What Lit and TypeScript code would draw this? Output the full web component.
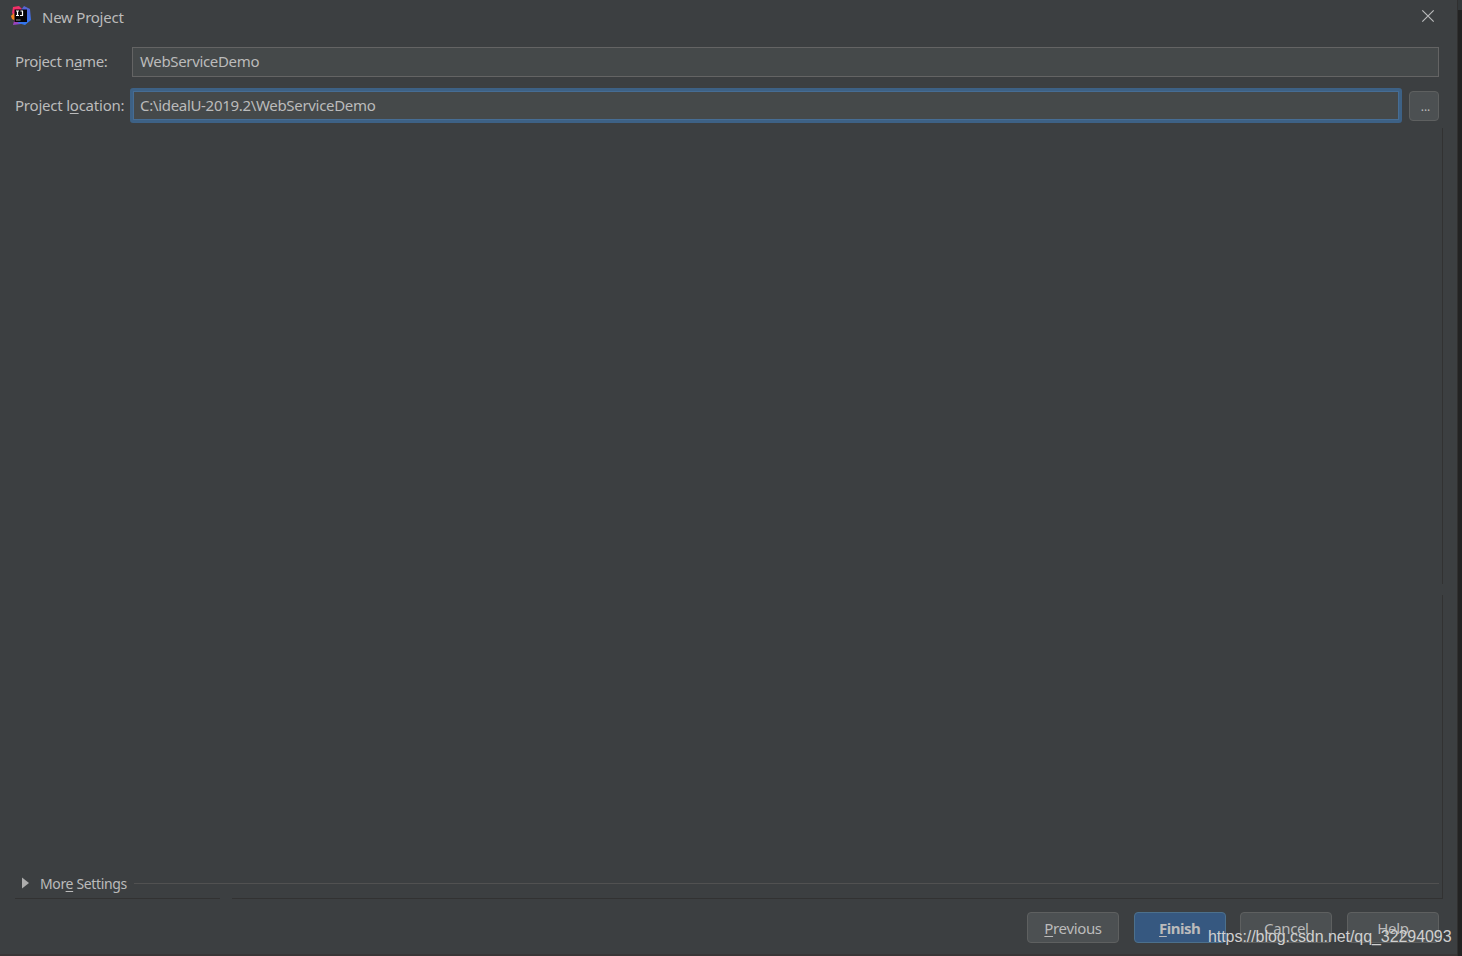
import { LitElement, html, css } from "lit";
import { customElement } from "lit/decorators.js";

@customElement("app-root")
export class AppRoot extends LitElement {
  static styles = css`
    :host {
      display: block;
      position: relative;
      width: 1462px;
      height: 956px;
      overflow: hidden;
      background: #3c3f41;
      color: #bbbbbb;
      font-family: "Noto Sans", "Open Sans", sans-serif;
      font-size: 15px;
      line-height: 20px;
    }
    * { box-sizing: border-box; }
    .window { display: flex; height: 100%; }
    .dialog { width: 1457px; height: 956px; display: flex; flex-direction: column; border-bottom: 2px solid #393637; }
    .edge { width: 5px; background: #222222; border-left: 1px solid #303030; }
    .edge-top { height: 10px; background: #34383a; }
    .title { height: 47px; flex: none; display: flex; padding: 0 22px 0 10px; }
    .logo { width: 22px; height: 22px; margin-top: 5px; }
    .caption { flex: 1; padding: 7px 0 0 10px; letter-spacing: -0.24px; }
    .close { width: 14px; height: 14px; margin-top: 9px; }
    .row { display: flex; flex: none; padding-left: 15px; }
    .name-row { height: 41px; }
    .loc-row { height: 40px; }
    .label { width: 117px; padding-top: 4px; white-space: nowrap; letter-spacing: -0.36px; }
    .loc-row .label { width: 115px; padding-top: 7px; letter-spacing: -0.22px; }
    .field { background: #45494a; white-space: pre; letter-spacing: -0.34px; }
    .plain { width: 1307px; height: 30px; border: 1px solid #646464; padding: 3px 7px; }
    .focused { width: 1272px; height: 35px; border: 3px solid #3d6185; border-radius: 3px; padding: 0; }
    .inner { height: 29px; border: 1px solid #466d94; padding: 3px 6px; letter-spacing: -0.31px; }
    .browse {
      width: 30px; height: 30px; margin: 3px 0 0 7px; text-align: center; padding: 5px 0 0 3px;
      background: #4c5052; border: 1px solid #5e6060; border-radius: 4px; font-size: 12px;
    }
    .pane { flex: none; height: 770px; width: 1428px; margin-left: 15px; display: flex; }
    .body { flex: 1; display: flex; flex-direction: column; justify-content: flex-end; }
    .rail { width: 1px; display: flex; flex-direction: column; gap: 11px; }
    .rail-a { height: 456px; background: #323232; }
    .rail-b { flex: 1; background: #323232; }
    .more { display: flex; height: 26px; align-items: flex-start; padding: 2px 3px 0 7px; font-size: 14px; }
    .arrow { width: 7px; height: 12px; margin-top: 3px; }
    .more-text { width: 112px; padding-left: 11px; white-space: nowrap; letter-spacing: -0.36px; }
    .sep { flex: 1; height: 1px; background: #515151; margin-top: 9px; }
    .more-text { width: 105px; }
    .base { flex: none; display: flex; gap: 12px; width: 1428px; margin-left: 15px; height: 1px; }
    .base-a { width: 205px; background: #323232; }
    .base-b { flex: 1; background: #323232; }
    .buttons { display: flex; gap: 14.67px; justify-content: flex-end; padding: 13px 18px 0 0; }
    .btn {
      width: 92px; height: 31px; background: #4c5052; border: 1px solid #5e6060;
      border-radius: 4px; text-align: center; padding-top: 5px; letter-spacing: -0.35px;
    }
    .primary { background: #365880; border-color: #4c708c; font-weight: 700; letter-spacing: -0.5px; }
    u { text-decoration-thickness: 1px; text-underline-offset: 2px; text-decoration-skip-ink: none; }
    .watermark {
      position: absolute; left: 1208px; top: 927px; white-space: nowrap; letter-spacing: -0.06px;
      font: 16px/20px "Liberation Sans", Arial, sans-serif; color: #d0d0d0;
    }
  `;

  render() {
    return html`
      <div class="window">
        <div class="dialog">
          <div class="title">
            <svg class="logo" viewBox="0 0 22 22">
              <defs>
                <linearGradient id="p" x1="0" y1="0" x2="0.3" y2="1"><stop offset="0" stop-color="#ff315b"/><stop offset="0.5" stop-color="#e02d7c"/><stop offset="1" stop-color="#8a48c8"/></linearGradient>
                <linearGradient id="b" x1="0" y1="0" x2="0" y2="1"><stop offset="0" stop-color="#5a62d2"/><stop offset="1" stop-color="#2f78ef"/></linearGradient>
              </defs>
              <path d="M3 2L9 1L13 5L11 19L3 20L5 12L2 8Z" fill="url(#p)"/>
              <path d="M1 11L4 8L6 16L2 14Z" fill="#f58220"/>
              <path d="M14 1L20 4L21 15L15 20L8 18L11 5Z" fill="url(#b)"/>
              <path d="M4.500 4.500H17V17H4.500Z" fill="#060406"/>
              <path d="M6 6H9M7.500 6V10.500M6 10.500H9M10.500 6H13M12.500 6V10.500H10" fill="none" stroke="#fff" stroke-width="1.200"/>
              <path d="M6 15H10.500" stroke="#999" stroke-width="1"/>
            </svg>
            <div class="caption">New Project</div>
            <svg class="close" viewBox="0 0 14 14"><path d="M1.300 1.300L12.700 12.700M12.700 1.300L1.300 12.700" stroke="#b8b9ba" stroke-width="1.200"/></svg>
          </div>
          <div class="row name-row">
            <div class="label">Project n<u>a</u>me:</div>
            <div class="field plain">WebServiceDemo</div>
          </div>
          <div class="row loc-row">
            <div class="label">Project l<u>o</u>cation:</div>
            <div class="field focused"><div class="inner">C:\\idealU-2019.2\\WebServiceDemo</div></div>
            <div class="browse">...</div>
          </div>
          <div class="pane">
            <div class="body">
              <div class="more">
                <svg class="arrow" viewBox="0 0 7 12"><path d="M0 0.500L7 6L0 11.500Z" fill="#adadad"/></svg>
                <div class="more-text">Mor<u>e</u> Settings</div>
                <div class="sep"></div>
              </div>
            </div>
            <div class="rail"><div class="rail-a"></div><div class="rail-b"></div></div>
          </div>
          <div class="base"><div class="base-a"></div><div class="base-b"></div></div>
          <div class="buttons">
            <div class="btn"><u>P</u>revious</div>
            <div class="btn primary"><u>F</u>inish</div>
            <div class="btn">Cancel</div>
            <div class="btn">Help</div>
          </div>
        </div>
        <div class="edge"><div class="edge-top"></div></div>
      </div>
      <div class="watermark">https://blog.csdn.net/qq_32294093</div>
    `;
  }
}
